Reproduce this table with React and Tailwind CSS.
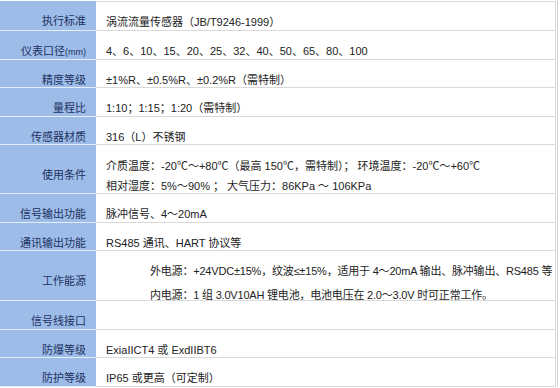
import React from "react";

const rows = [
  { label: "执行标准", h: "h-[30px]", lines: ["涡流流量传感器（JB/T9246-1999）"] },
  { label: "仪表口径(mm)", h: "h-[29px]", lines: ["4、6、10、15、20、25、32、40、50、65、80、100"] },
  { label: "精度等级", h: "h-[28px]", lines: ["±1%R、±0.5%R、±0.2%R（需特制）"] },
  { label: "量程比", h: "h-[29px]", lines: ["1:10；1:15；1:20（需特制）"] },
  { label: "传感器材质", h: "h-[28px]", lines: ["316（L）不锈钢"] },
  {
    label: "使用条件",
    h: "h-[49px]",
    tall: "cond",
    lines: [
      "介质温度：-20℃～+80℃（最高 150℃，需特制）；  环境温度：-20℃～+60℃",
      "相对湿度：5%～90% ；  大气压力：86KPa ～ 106KPa",
    ],
  },
  { label: "信号输出功能", h: "h-[29px]", lines: ["脉冲信号、4～20mA"] },
  { label: "通讯输出功能", h: "h-[28px]", lines: ["RS485 通讯、HART 协议等"] },
  {
    label: "工作能源",
    h: "h-[50px]",
    tall: "power",
    lines: [
      "外电源：+24VDC±15%，纹波≤±15%，适用于 4～20mA 输出、脉冲输出、RS485 等",
      "内电源：1 组 3.0V10AH 锂电池，电池电压在 2.0～3.0V 时可正常工作。",
    ],
  },
  { label: "信号线接口", h: "h-[29px]", lines: [] },
  { label: "防爆等级", h: "h-[28px]", lines: ["ExiaIICT4 或 ExdIIBT6"] },
  { label: "防护等级", h: "h-[29px]", lines: ["IP65 或更高（可定制）"] },
];

function Label({ text }) {
  if (text === "仪表口径(mm)") {
    return (
      <span>
        仪表口径<span className="text-[9px]">(mm)</span>
      </span>
    );
  }
  return <span>{text}</span>;
}

export default function App() {
  return (
    <div
      className="w-[560px] h-[388px] bg-white text-[11px]"
      style={{ fontFamily: '"Liberation Sans", "Noto Sans CJK SC", sans-serif' }}
    >
      <div className="w-[558px] pt-[1px] border-r border-[#d6d6d6] pr-[1px]">
        {rows.map((r, i) => (
          <div key={i} className={`flex ${r.h}`}>
            <div
              className={`w-[96px] shrink-0 bg-[#9dbce8] border-b border-[#e4edf9] text-right pr-[10px] text-[#1e3262] leading-[14px] ${
                r.tall ? "pt-[23px]" : "pt-[13px]"
              }`}
            >
              <Label text={r.label} />
            </div>
            <div
              className={`flex-1 border-b border-r border-[#d9d9d9] text-[#222] whitespace-nowrap ${
                i === 0 ? "border-t" : ""
              } ${
                r.tall === "cond"
                  ? "pt-[11px] pl-[10px] leading-[20px]"
                  : r.tall === "power"
                  ? "pt-[8px] pl-[54px] leading-[24px] tracking-[-0.2px]"
                  : "pt-[13px] pl-[10px] leading-[14px]"
              }`}
            >
              {r.lines.map((l, j) => (
                <div key={j}>{l}</div>
              ))}
            </div>
          </div>
        ))}
      </div>
    </div>
  );
}
